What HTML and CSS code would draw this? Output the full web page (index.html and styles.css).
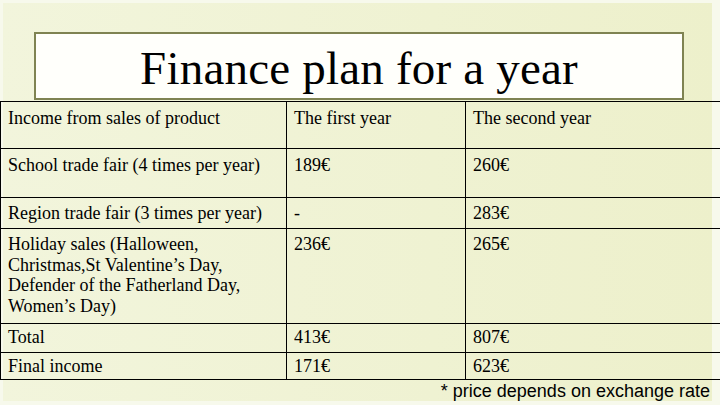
FILE: index.html
```html
<!DOCTYPE html>
<html>
<head>
<meta charset="utf-8">
<link rel="stylesheet" href="styles.css">
</head>
<body>
<div class="slide">
  <div class="title-box"><h1 class="title">Finance plan for a year</h1></div>
  <table class="plan">
    <colgroup><col class="c1"><col class="c2"><col class="c3"></colgroup>
    <tr class="r1"><td>Income from sales of product</td><td>The first year</td><td>The second year</td></tr>
    <tr class="r2"><td>School trade fair (4 times per year)</td><td>189€</td><td>260€</td></tr>
    <tr class="r3"><td>Region trade fair (3 times per year)</td><td>-</td><td>283€</td></tr>
    <tr class="r4"><td>Holiday sales (Halloween, Christmas,St Valentine’s Day, Defender of the Fatherland Day, Women’s Day)</td><td>236€</td><td>265€</td></tr>
    <tr class="r5"><td>Total</td><td>413€</td><td>807€</td></tr>
    <tr class="r6"><td>Final income</td><td>171€</td><td>623€</td></tr>
  </table>
  <div class="note">* price depends on exchange rate</div>
</div>
</body>
</html>
```

FILE: styles.css
```css
html, body {
  margin: 0;
  padding: 0;
}
body {
  width: 720px;
  height: 405px;
  overflow: hidden;
}
.slide {
  width: 720px;
  height: 405px;
  box-sizing: border-box;
  padding-top: 32px;
  overflow: hidden;
  background: linear-gradient(90deg, #f2f5dc 0%, #eff2d2 60%, #edf0cb 100%);
  box-shadow: inset 3px 3px 0 0 #f7f9ec, inset -8px -4px 0 0 #f7f9ec;
  font-family: "Liberation Serif", "Times New Roman", serif;
  color: #000;
}
.title-box {
  margin-left: 34px;
  width: 650px;
  height: 68px;
  box-sizing: border-box;
  border: 2px solid #7f8352;
  background: #fffffb;
  display: flex;
  align-items: flex-end;
  justify-content: center;
}
.title {
  margin: 0 0 3px 0;
  font-family: "Liberation Serif", "Times New Roman", serif;
  font-weight: normal;
  font-size: 47px;
  line-height: 54px;
  letter-spacing: 0.2px;
}
.plan {
  margin-top: 1px;
  width: 720px;
  border-collapse: collapse;
  table-layout: fixed;
  font-family: "Liberation Serif", "Times New Roman", serif;
  font-size: 18px;
  line-height: 20.5px;
}
.c1 { width: 286px; }
.c2 { width: 179px; }
.c3 { width: 255px; }
.plan td {
  border: 1px solid #000;
  vertical-align: top;
  padding: 5px 7px 0 7px;
}
.plan td:last-child { border-right: none; }
.r1 td { height: 40px; padding-top: 6px; }
.r2 td { height: 42px; padding-top: 6px; }
.r3 td { height: 25px; padding-top: 5px; }
.r4 td { height: 89px; padding-top: 5px; }
.r5 td { height: 25px; padding-top: 3px; }
.r6 td { height: 23px; padding-top: 3px; }
.note {
  text-align: right;
  padding-right: 10px;
  font-family: "Liberation Sans", Arial, sans-serif;
  font-size: 18px;
  line-height: 22px;
}
```
